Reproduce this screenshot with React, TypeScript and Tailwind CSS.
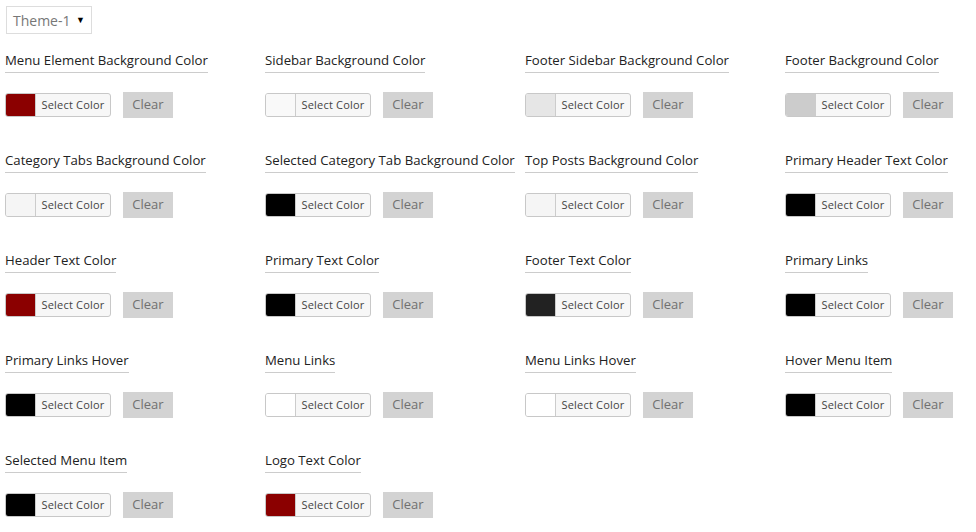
import React from "react";

type Item = { label: string; color: string };

const items: Item[] = [
  { label: "Menu Element Background Color", color: "#8b0000" },
  { label: "Sidebar Background Color", color: "#f9f9f9" },
  { label: "Footer Sidebar Background Color", color: "#e6e6e6" },
  { label: "Footer Background Color", color: "#cccccc" },
  { label: "Category Tabs Background Color", color: "#f5f5f5" },
  { label: "Selected Category Tab Background Color", color: "#000000" },
  { label: "Top Posts Background Color", color: "#f5f5f5" },
  { label: "Primary Header Text Color", color: "#000000" },
  { label: "Header Text Color", color: "#8b0000" },
  { label: "Primary Text Color", color: "#000000" },
  { label: "Footer Text Color", color: "#222222" },
  { label: "Primary Links", color: "#000000" },
  { label: "Primary Links Hover", color: "#000000" },
  { label: "Menu Links", color: "#ffffff" },
  { label: "Menu Links Hover", color: "#ffffff" },
  { label: "Hover Menu Item", color: "#000000" },
  { label: "Selected Menu Item", color: "#000000" },
  { label: "Logo Text Color", color: "#8b0000" },
];

function Cell({ item }: { item: Item }) {
  return (
    <div className="h-[100px]">
      <div className="h-[23px]">
        <span className="inline-block text-[13.2px] leading-[20px] pb-[2px] text-[#222] border-b border-[#cccccc] whitespace-nowrap">
          {item.label}
        </span>
      </div>
      <div className="mt-[22px] flex items-center h-[26px]">
        <div className="flex h-[24px] w-[106px] rounded-[3px] border border-[#c8c8c8] overflow-hidden bg-[#f7f7f7]">
          <div className="w-[30px] h-full border-r border-[#cccccc]" style={{ backgroundColor: item.color }} />
          <div className="flex-1 flex items-center justify-center text-[11px] text-[#444] tracking-[0.2px]">
            Select Color
          </div>
        </div>
        <div className="ml-[12px] w-[50px] h-[26px] bg-[#d3d3d3] flex items-center justify-center text-[13px] text-[#707070]">
          Clear
        </div>
      </div>
    </div>
  );
}

export default function App() {
  return (
    <div className="w-[976px] h-[532px] bg-white pl-[5px] pt-[6px] overflow-hidden" style={{ fontFamily: '"Open Sans", "Noto Sans", sans-serif' }}>
      <div className="ml-[1px] w-[86px] h-[28px] border border-[#dddddd] flex items-center pl-[6px] pr-[6px] justify-between">
        <span className="text-[14px] text-[#777]">Theme-1</span>
        <span className="text-[9px] text-black">▼</span>
      </div>
      <div className="mt-[13px] grid grid-cols-[260px_260px_260px_260px]">
        {items.map((it, i) => (
          <Cell key={i} item={it} />
        ))}
      </div>
    </div>
  );
}
